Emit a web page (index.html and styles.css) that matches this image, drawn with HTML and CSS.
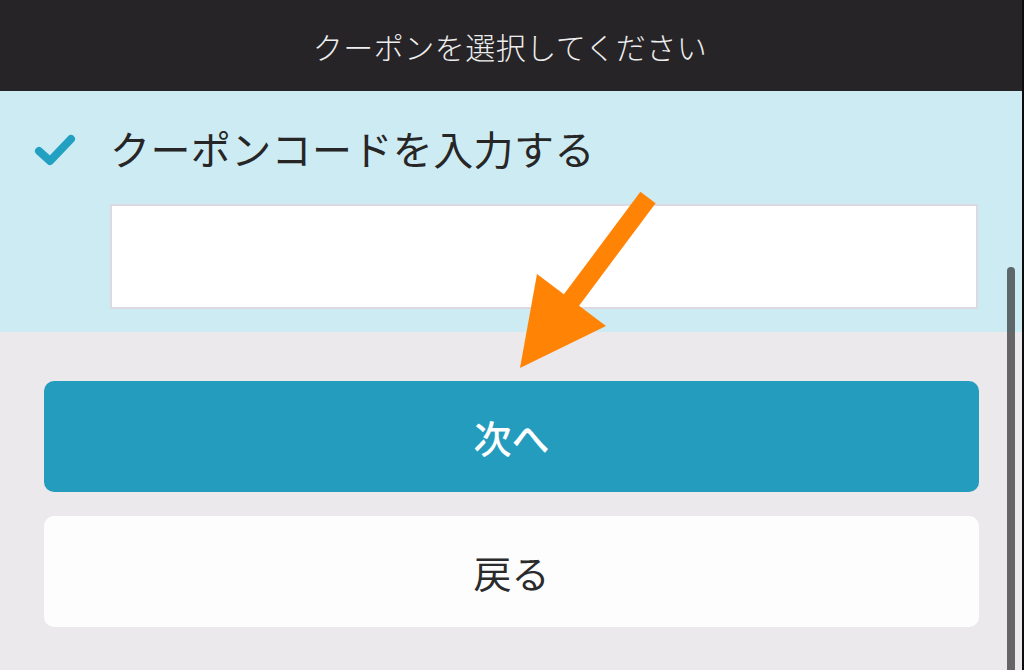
FILE: index.html
```html
<!DOCTYPE html>
<html lang="ja">
<head>
  <meta charset="UTF-8">
  <meta name="viewport" content="width=device-width, initial-scale=1.0">
  <title>クーポンを選択してください</title>
  <link rel="stylesheet" href="styles.css">
</head>
<body>
  <div id="screen">
    <header class="title-bar">クーポンを選択してください</header>

    <section class="coupon">
      <div class="coupon-row">
        <svg class="check" width="48" height="40" viewBox="0 0 48 40">
          <path d="M6 22 L17 32 L38 10" fill="none" stroke="#22a0c1" stroke-width="8" stroke-linecap="round" stroke-linejoin="round"/>
        </svg>
        <span class="coupon-label">クーポンコードを入力する</span>
      </div>
      <input class="coupon-input" type="text">
    </section>

    <section class="actions">
      <button class="btn btn-next">次へ</button>
      <button class="btn btn-back">戻る</button>
    </section>

    <div class="scrollbar"></div>

    <!-- 注釈の矢印 -->
    <svg class="pointer" width="1024" height="670" viewBox="0 0 1024 670">
      <line x1="648" y1="197.5" x2="570" y2="302" stroke="#ff8406" stroke-width="19"/>
      <polygon points="520,368 537,274 606,326" fill="#ff8406"/>
    </svg>
  </div>
</body>
</html>
```

FILE: styles.css
```css
html, body {
  margin: 0;
  padding: 0;
}

body {
  width: 1024px;
  height: 670px;
  overflow: hidden;
  background-color: #ebe9ec;
  font-family: 'Noto Sans CJK JP', 'Noto Sans', sans-serif;
}

#screen {
  position: relative;
  display: flex;
  flex-direction: column;
  height: 670px;
  border-right: 2px solid #0c0c0c;
  box-sizing: border-box;
}

.title-bar {
  height: 91px;
  display: flex;
  align-items: center;
  justify-content: center;
  background-color: #262427;
  color: #eeeeee;
  font-size: 30px;
  font-weight: 300;
  letter-spacing: 0.5px;
  padding-right: 2px;
}

.coupon {
  background-color: #cdebf2;
  padding: 32px 44px 23px 33px;
}

.coupon-row {
  display: flex;
  align-items: center;
  height: 50px;
}

.check {
  margin-right: 29px;
  margin-top: 2px;
}

.coupon-label {
  font-size: 40px;
  letter-spacing: 0.4px;
  color: #262626;
  line-height: 1;
}

.coupon-input {
  display: block;
  box-sizing: border-box;
  width: 868px;
  height: 105px;
  margin: 31px 0 0 77px;
  border: 2px solid #dcdae0;
  background: #ffffff;
  outline: none;
}

.actions {
  flex: 1;
  display: flex;
  flex-direction: column;
  gap: 24px;
  padding: 49px 43px 0 44px;
}

.btn {
  height: 111px;
  border: none;
  border-radius: 10px;
  font-family: inherit;
  font-size: 38px;
  cursor: pointer;
}

.btn-next {
  background-color: #239cbe;
  color: #ffffff;
  font-weight: 500;
}

.btn-back {
  background-color: #fdfdfe;
  color: #2b2b2b;
}

.scrollbar {
  position: absolute;
  left: 1007px;
  top: 267px;
  width: 8px;
  height: 420px;
  border-radius: 4px;
  background-color: rgba(50, 50, 50, 0.72);
}

.pointer {
  position: absolute;
  left: 0;
  top: 0;
  pointer-events: none;
}
```
